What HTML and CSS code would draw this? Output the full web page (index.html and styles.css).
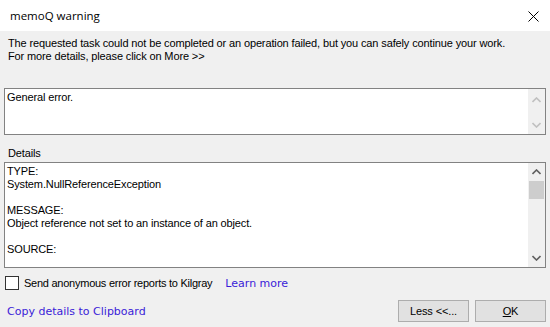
FILE: index.html
```html
<!DOCTYPE html>
<html lang="en">
<head>
    <meta charset="UTF-8">
    <title>memoQ warning</title>
    <link rel="stylesheet" href="styles.css">
</head>
<body>
    <div class="dialog">
        <div class="titlebar">
            <span class="title">memoQ warning</span>
            <svg class="close" width="11" height="11" viewBox="0 0 11 11">
                <path d="M0.5 0.5 L10.5 10.5 M10.5 0.5 L0.5 10.5" stroke="#000" stroke-width="1" fill="none" />
            </svg>
        </div>

        <p class="message">
            The requested task could not be completed or an operation failed, but you can safely continue your work.<br>
            For more details, please click on More &gt;&gt;
        </p>

        <!-- short error summary -->
        <div class="textbox summary">
            <div class="textbox-content">General error.</div>
            <div class="scrollbar disabled">
                <svg class="arrow" width="9" height="6" viewBox="0 0 9 6"><path d="M0.5 5 L4.5 1 L8.5 5" /></svg>
                <svg class="arrow" width="9" height="6" viewBox="0 0 9 6"><path d="M0.5 1 L4.5 5 L8.5 1" /></svg>
            </div>
        </div>

        <div class="label">Details</div>

        <div class="textbox details">
            <div class="textbox-content">
                TYPE:<br>
                System.NullReferenceException<br>
                <br>
                MESSAGE:<br>
                Object reference not set to an instance of an object.<br>
                <br>
                SOURCE:
            </div>
            <div class="scrollbar">
                <svg class="arrow" width="9" height="6" viewBox="0 0 9 6"><path d="M0.5 5 L4.5 1 L8.5 5" /></svg>
                <div class="thumb"></div>
                <svg class="arrow bottom" width="9" height="6" viewBox="0 0 9 6"><path d="M0.5 1 L4.5 5 L8.5 1" /></svg>
            </div>
        </div>

        <div class="report-row">
            <span class="checkbox"></span>
            <span class="report-text">Send anonymous error reports to Kilgray</span>
            <a class="link learn" href="#">Learn more</a>
        </div>

        <div class="footer">
            <a class="link" href="#">Copy details to Clipboard</a>
            <div class="buttons">
                <button class="btn">Less &lt;&lt;...</button>
                <button class="btn"><u>O</u>K</button>
            </div>
        </div>
    </div>
</body>
</html>
```

FILE: styles.css
```css
html, body {
    margin: 0;
    padding: 0;
}

body {
    width: 550px;
    height: 327px;
    overflow: hidden;
    background-color: #f0f0f0;
    font-family: "Liberation Sans", Arial, sans-serif;
    font-size: 11px;
    letter-spacing: -0.13px;
    color: #000;
}

.dialog {
    display: flex;
    flex-direction: column;
    height: 327px;
}

.titlebar {
    height: 31px;
    background-color: #fff;
    display: flex;
    align-items: center;
    justify-content: space-between;
    padding: 0 11px 0 10px;
}

.title {
    font-family: "Open Sans", "Noto Sans", sans-serif;
    font-size: 11.5px;
    letter-spacing: 0;
    margin-top: -1px;
}

.close {
    display: block;
    margin-top: 1px;
}

.message {
    margin: 6px 0 0 8px;
    line-height: 13px;
}

.textbox {
    display: grid;
    grid-template-columns: 1fr 17px;
    margin: 25px 4px 0 4px;
    border: 1px solid #828282;
    background-color: #fff;
}

.textbox-content {
    padding: 2px 2px 0 2px;
    line-height: 13px;
    overflow: hidden;
}

.summary {
    height: 47px;
    box-sizing: border-box;
}

.details {
    margin-top: 2px;
    height: 106px;
    box-sizing: border-box;
}

.scrollbar {
    background-color: #f0f0f0;
    display: flex;
    flex-direction: column;
    align-items: center;
    justify-content: space-between;
    padding: 8px 0 6px;
}

.details .scrollbar {
    justify-content: flex-start;
    padding-top: 6px;
}

.arrow path {
    fill: none;
    stroke: #606060;
    stroke-width: 1.6;
}

.disabled .arrow path {
    stroke: #c0c0c0;
}

.thumb {
    width: 15px;
    height: 18px;
    margin-top: 6px;
    background-color: #cdcdcd;
}

.arrow.bottom {
    margin-top: auto;
}

.label {
    margin: 12px 0 0 8px;
    line-height: 13px;
}

.report-row {
    display: flex;
    align-items: center;
    margin: 8px 0 0 5px;
    height: 14px;
}

.checkbox {
    width: 12px;
    height: 12px;
    border: 1px solid #333;
    background-color: #fff;
}

.report-text {
    margin-left: 5px;
    letter-spacing: -0.25px;
}

.link {
    font-family: "DejaVu Sans", Verdana, sans-serif;
    font-size: 11px;
    letter-spacing: 0;
    color: #3a1cd8;
    text-decoration: none;
}

.learn {
    margin-left: 13px;
}

.footer {
    display: flex;
    align-items: center;
    justify-content: space-between;
    margin: 10px 4px 0 7px;
}

.buttons {
    display: flex;
    gap: 6px;
}

.btn {
    width: 71px;
    height: 22px;
    padding: 0;
    border: 1px solid #adadad;
    background-color: #e1e1e1;
    font-family: "Liberation Sans", Arial, sans-serif;
    font-size: 11px;
    letter-spacing: -0.13px;
    color: #000;
}
```
